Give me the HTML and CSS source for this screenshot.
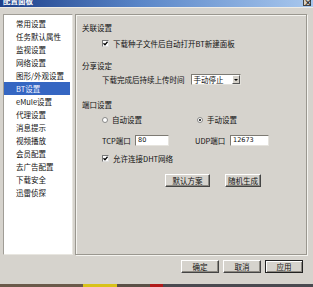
FILE: index.html
```html
<!DOCTYPE html>
<html lang="zh-CN">
<head>
    <meta charset="UTF-8">
    <title>配置面板</title>
    <link rel="stylesheet" href="styles.css">
</head>
<body>
    <div class="titlebar">
        <span class="title">配置面板</span>
        <span class="close">×</span>
    </div>
    <div class="main">
        <ul class="nav">
            <li>常用设置</li>
            <li>任务默认属性</li>
            <li>监视设置</li>
            <li>网络设置</li>
            <li>图形/外观设置</li>
            <li class="active">BT设置</li>
            <li>eMule设置</li>
            <li>代理设置</li>
            <li>消息提示</li>
            <li>视频播放</li>
            <li>会员配置</li>
            <li>去广告配置</li>
            <li>下载安全</li>
            <li>迅雷侦探</li>
        </ul>
        <div class="panel">
            <div class="group-title">关联设置</div>
            <div class="row check-row first">
                <span class="check"><svg width="5" height="5" viewBox="0 0 5 5"><path d="M0.5 2.2 L2 3.8 L4.6 0.8" fill="none" stroke="#000" stroke-width="1.3"/></svg></span>
                <span>下载种子文件后自动打开BT新建面板</span>
            </div>

            <div class="group-title share">分享设定</div>
            <div class="row select-row">
                <span>下载完成后持续上传时间</span>
                <span class="select"><span class="select-text">手动停止</span><span class="select-btn"></span></span>
            </div>

            <div class="group-title port">端口设置</div>
            <div class="row grid radio-row">
                <span class="radio-item"><span class="radio"></span>自动设置</span>
                <span class="radio-item second"><span class="radio on"></span>手动设置</span>
            </div>
            <div class="row grid input-row">
                <span class="field"><span class="field-label">TCP端口</span><span class="input tcp">80</span></span>
                <span class="field"><span class="field-label udp">UDP端口</span><span class="input udp-in">12673</span></span>
            </div>
            <div class="row check-row dht">
                <span class="check"><svg width="5" height="5" viewBox="0 0 5 5"><path d="M0.5 2.2 L2 3.8 L4.6 0.8" fill="none" stroke="#000" stroke-width="1.3"/></svg></span>
                <span>允许连接DHT网络</span>
            </div>
            <div class="row btn-row">
                <button class="btn wide">默认方案</button>
                <button class="btn">随机生成</button>
            </div>
        </div>
    </div>
    <div class="footer">
        <button class="btn foot">确定</button>
        <button class="btn foot">取消</button>
        <button class="btn foot default">应用</button>
    </div>
    <div class="taskbar">
        <span class="seg-a"></span><span class="seg-b"></span><span class="seg-c"></span><span class="seg-d"></span><span class="seg-e"></span>
    </div>
</body>
</html>
```

FILE: styles.css
```css
body { margin: 0; background: #d6d3cd; font-family: "Noto Sans CJK SC", "DejaVu Sans", sans-serif; font-size: 7.5px; color: #111; width: 313px; height: 287px; overflow: hidden; }

.titlebar { height: 7px; background: linear-gradient(to right, #1d3f8a, #5a86c8 45%, #a9c8ee); position: relative; overflow: hidden; border-bottom: 1px solid #eeece6; }
.title { display: block; color: #fff; font-weight: bold; font-size: 7.5px; line-height: 7px; margin-top: -3px; padding-left: 3px; }
.close { position: absolute; right: 2px; top: -2px; width: 8px; height: 8px; background: #d4d0c8; border: 1px solid #444; box-sizing: border-box; font-size: 8px; line-height: 8px; text-align: center; font-weight: bold; }

.main { display: flex; height: 241px; padding: 6px 0 0 3px; gap: 2px; }

.nav { list-style: none; margin: 0; padding: 2px 2px 0 0; width: 66px; background: #fff; border: 1px solid #a09d96; border-right-color: #e8e6e0; border-bottom-color: #e8e6e0; }
.nav li { height: 13px; line-height: 13px; padding-left: 12px; white-space: nowrap; }
.nav li.active { background: #3566c2; color: #f2f4ff; }

.panel { width: 232px; border: 1px solid #9a978f; box-shadow: inset 1px 1px 0 #f4f3ef, 1px 1px 0 #f4f3ef; padding: 8px 0 0 6px; box-sizing: border-box; }

.group-title { line-height: 10px; height: 10px; }
.group-title.share { margin-top: 13px; }
.group-title.port { margin-top: 15px; }

.row { margin-left: 20px; display: flex; align-items: center; }
.check-row { height: 10px; gap: 4px; }
.check-row.first { margin-top: 5px; }
.check-row.dht { margin-top: 7px; }
.check { width: 7px; height: 7px; background: #fff; border: 1px solid #777; border-right-color: #ddd; border-bottom-color: #ddd; box-sizing: border-box; display: flex; align-items: center; justify-content: center; }

.select-row { margin-top: 3px; height: 11px; gap: 0; }
.select { margin-left: 6px; width: 50px; height: 11px; background: #fff; border: 1px solid #7d7a73; border-right-color: #e2e0da; border-bottom-color: #e2e0da; box-sizing: border-box; display: flex; }
.select-text { flex: 1; line-height: 9px; padding-left: 2px; }
.select-btn { width: 8px; background: #d4d0c8; border: 1px solid #fff; border-right-color: #555; border-bottom-color: #555; box-sizing: border-box; position: relative; }
.select-btn::after { content: ""; position: absolute; left: 1px; top: 3px; border-left: 2px solid transparent; border-right: 2px solid transparent; border-top: 2px solid #000; }

.grid { display: grid; grid-template-columns: 93px 1fr; }
.radio-row { margin-top: 4px; height: 10px; }
.radio-item { display: flex; align-items: center; gap: 4px; }
.radio-item.second { padding-left: 2px; }
.radio { width: 6px; height: 6px; border-radius: 50%; background: #fff; border: 1px solid #888; box-sizing: border-box; position: relative; }
.radio.on::after { content: ""; position: absolute; left: 1px; top: 1px; width: 2px; height: 2px; border-radius: 50%; background: #000; }

.input-row { margin-top: 11px; height: 11px; }
.field { display: flex; align-items: center; }
.field-label { width: 33px; }
.field-label.udp { width: 35px; }
.input { height: 11px; background: #fff; border: 1px solid #7d7a73; border-right-color: #e6e4de; border-bottom-color: #e6e4de; box-sizing: border-box; line-height: 9px; padding-left: 2px; font-family: "DejaVu Sans", sans-serif; font-size: 6.5px; }
.input.tcp { width: 34px; }
.input.udp-in { width: 39px; }

.btn-row { margin-top: 11px; margin-left: 83px; gap: 15px; }
.btn { height: 13px; padding: 0; font-family: inherit; font-size: 7.5px; color: #111; background: #d6d3cd; border: 1px solid #fff; border-right-color: #444; border-bottom-color: #444; box-shadow: inset -1px -1px 0 #8c8982; width: 36px; line-height: 11px; }
.btn.wide { width: 45px; }

.footer { display: flex; justify-content: flex-end; gap: 4px; padding-right: 10px; margin-top: 5px; }
.btn.foot { width: 38px; }
.btn.default { outline: 1px solid #222; outline-offset: -1px; border-color: #222; box-shadow: inset 1px 1px 0 #fff, inset -1px -1px 0 #8c8982; }

.taskbar { position: absolute; left: 0; top: 284px; width: 313px; height: 3px; display: flex; }
.seg-a { width: 83px; background: #6a5a4a; }
.seg-b { width: 34px; background: #d8c21a; }
.seg-c { width: 33px; background: #5a5046; }
.seg-d { width: 13px; background: #b01a1a; }
.seg-e { flex: 1; background: #4a4a50; }
```
